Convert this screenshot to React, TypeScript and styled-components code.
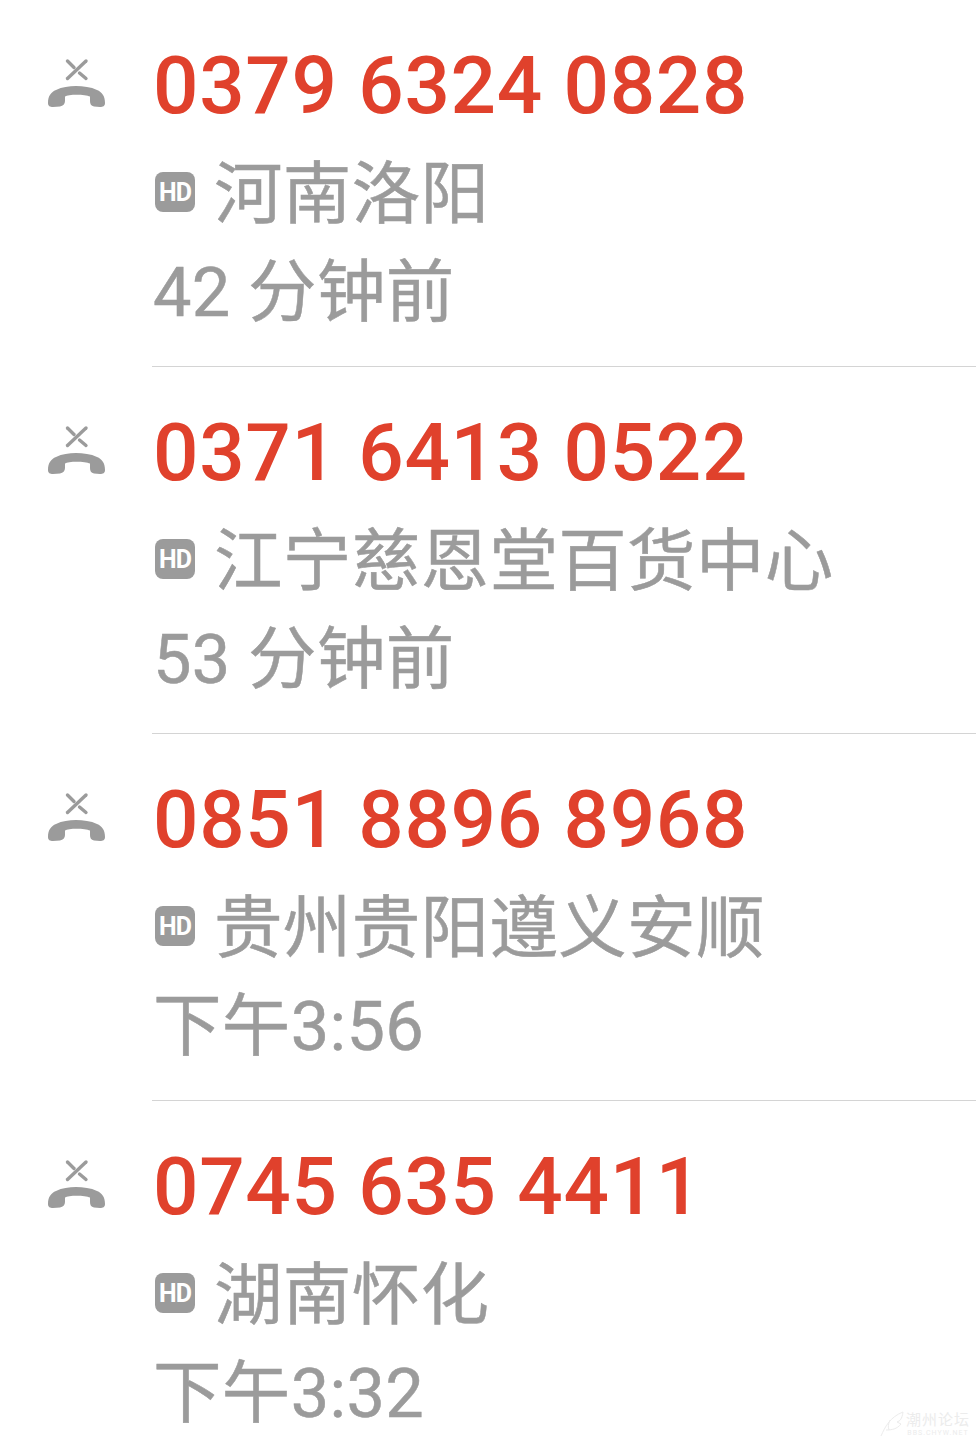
import React from "react";
import styled, { createGlobalStyle } from "styled-components";

const Global = createGlobalStyle`
	html, body {
		margin: 0;
		padding: 0;
		background: #fff;
		height: 1443px;
		overflow: hidden;
	}
`;

const FONT = `Roboto, "Noto Sans CJK SC", sans-serif`;

const List = styled.div`
	position: relative;
	width: 976px;
	height: 1443px;
	overflow: hidden;
	background: #fff;
	font-family: ${FONT};
`;

const Row = styled.div`
	display: flex;
	height: 367px;
	box-sizing: border-box;
`;

const IconCol = styled.div`
	width: 152px;
	flex-shrink: 0;
	padding: 58px 0 0 47px;
	box-sizing: border-box;
`;

const Body = styled.div<{ $last?: boolean }>`
	flex: 1;
	box-sizing: border-box;
	padding-top: 36px;
	border-bottom: ${({ $last }) => ($last ? "none" : "1px solid #d4d4d4")};
`;

const Number = styled.div`
	font-size: 80px;
	font-weight: 500;
	line-height: 100px;
	letter-spacing: 0.7px;
	margin-left: 1px;
	color: #e0412c;
	white-space: nowrap;
`;

const Place = styled.div`
	display: flex;
	align-items: center;
	gap: 19px;
	height: 100px;
	margin-top: 2px;
	font-size: 68.5px;
	letter-spacing: 0.35px;
	color: #9b9b9b;
	-webkit-text-stroke: 0.5px #9b9b9b;
	white-space: nowrap;
`;

const Time = styled.div`
	height: 100px;
	line-height: 100px;
	margin-top: 5px;
	margin-left: 1px;
	font-size: 68.5px;
	letter-spacing: 0.35px;
	color: #9b9b9b;
	-webkit-text-stroke: 0.5px #9b9b9b;
	white-space: nowrap;
`;

const HdBadge = styled.span`
	display: flex;
	align-items: center;
	justify-content: center;
	width: 40px;
	height: 40px;
	margin: 8px 0 0 3px;
	border-radius: 8px;
	background: #9b9b9b;
	color: #fff;
	-webkit-text-stroke: 0;
	font-size: 25px;
	font-weight: 700;
	letter-spacing: -1px;
`;

const Watermark = styled.div`
	position: absolute;
	right: 6px;
	bottom: 6px;
	display: flex;
	align-items: flex-end;
	gap: 2px;
	color: #ececec;
`;

const WatermarkText = styled.div`
	display: flex;
	flex-direction: column;
	align-items: center;
	font-size: 15px;
	line-height: 17px;
	letter-spacing: 1px;
`;

const WatermarkSub = styled.span`
	font-size: 7px;
	line-height: 8px;
	letter-spacing: 1px;
`;

const MissedIcon = () => (
	<svg width="60" height="50" viewBox="0 0 60 50" fill="none">
		<path d="M39 3 L20.5 20.5" stroke="#9b9b9b" strokeWidth="3.4" strokeLinecap="round" />
		<path d="M20.5 3 L27 9.5" stroke="#9b9b9b" strokeWidth="3.4" strokeLinecap="round" />
		<path d="M32.5 15 L39 20.5" stroke="#9b9b9b" strokeWidth="3.4" strokeLinecap="round" />
		<path
			d="M1 45 C1 38 4 34 9 32 C15 29 22 28 29 28 C36 28 44 29 50 32 C55 34 58 38 58 45 C58 48 56 49 53 49 L47 48.5 C44 48 43 46 43 43 L43 38.5 C38 36 21 36 18 38.5 L18 43 C18 46 16 48 13 48.5 L6 49 C3 49 1 48 1 45 Z"
			fill="#9b9b9b"
		/>
	</svg>
);

const FeatherMark = () => (
	<svg width="24" height="26" viewBox="0 0 24 26" fill="none" stroke="#ececec" strokeWidth="1">
		<path d="M1 25 C5 16 10 6 23 1 C22 8 20 10 17 11 L21 13 C17 18 12 19 6 19" />
		<path d="M10 9 C8 13 8 16 9 19" />
	</svg>
);

const calls = [
	{ number: "0379 6324 0828", place: "河南洛阳", time: "42 分钟前" },
	{ number: "0371 6413 0522", place: "江宁慈恩堂百货中心", time: "53 分钟前" },
	{ number: "0851 8896 8968", place: "贵州贵阳遵义安顺", time: "下午3:56" },
	{ number: "0745 635 4411", place: "湖南怀化", time: "下午3:32" },
];

export default function App() {
	return (
		<List>
			<Global />
			{calls.map((call, i) => (
				<Row key={call.number}>
					<IconCol>
						<MissedIcon />
					</IconCol>
					<Body $last={i === calls.length - 1}>
						<Number>{call.number}</Number>
						<Place>
							<HdBadge>HD</HdBadge>
							{call.place}
						</Place>
						<Time>{call.time}</Time>
					</Body>
				</Row>
			))}
			<Watermark>
				<FeatherMark />
				<WatermarkText>
					潮州论坛
					<WatermarkSub>BBS.CHYW.NET</WatermarkSub>
				</WatermarkText>
			</Watermark>
		</List>
	);
}
